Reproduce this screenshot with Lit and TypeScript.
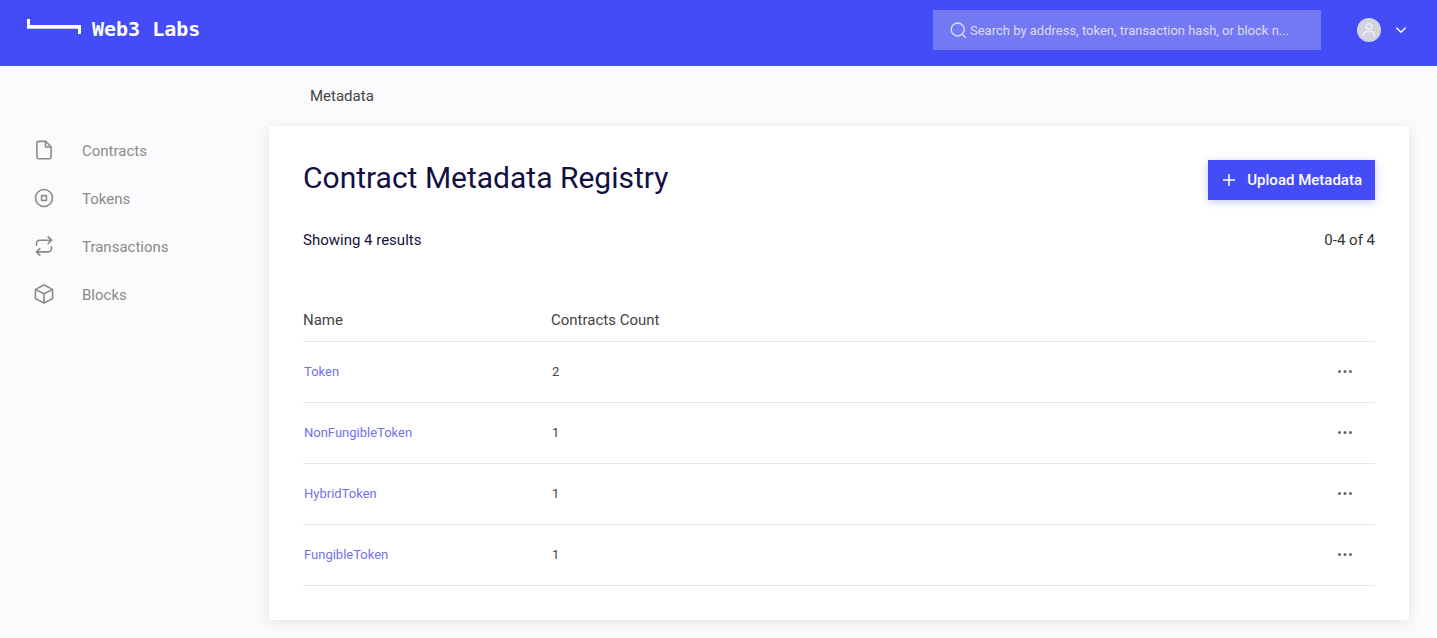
import { LitElement, html, svg, css } from "lit";
import { customElement } from "lit/decorators.js";

const icons = {
  contracts: svg`<path d="M14 1.600H5.500a2 2 0 0 0-2 2v16.800a2 2 0 0 0 2 2h13a2 2 0 0 0 2-2V8.100z"/><path d="M13.800 1.800v6.500h6.500"/>`,
  tokens: svg`<circle cx="12" cy="12" r="10.200"/><path d="M9.100 9.100h5.800v5.800H9.100z"/>`,
  transactions: svg`<path d="M17 1l4 4-4 4"/><path d="M3 11V9a4 4 0 0 1 4-4h14"/><path d="M7 23l-4-4 4-4"/><path d="M21 13v2a4 4 0 0 1-4 4H3"/>`,
  blocks: svg`<path d="M22.300 16.800V7.200a1.200 1.200 0 0 0-.7-1.100l-8.900-4.600a1.500 1.500 0 0 0-1.400 0L2.400 6.100a1.200 1.200 0 0 0-.7 1.100v9.600a1.200 1.200 0 0 0 .7 1.100l8.900 4.600a1.500 1.500 0 0 0 1.400 0l8.900-4.600a1.200 1.200 0 0 0 .7-1.100z"/><path d="M2.100 6.700l9.900 5 9.900-5M12 22.600V11.700"/>`,
};

const navItems = [
  { label: "Contracts", icon: icons.contracts },
  { label: "Tokens", icon: icons.tokens },
  { label: "Transactions", icon: icons.transactions },
  { label: "Blocks", icon: icons.blocks },
];

const entries = [
  { name: "Token", count: 2 },
  { name: "NonFungibleToken", count: 1 },
  { name: "HybridToken", count: 1 },
  { name: "FungibleToken", count: 1 },
];

@customElement("app-header")
class AppHeader extends LitElement {
  static styles = css`
    :host { display: block; }
    .bar {
      display: flex;
      align-items: center;
      gap: 36px;
      min-height: 66px;
      padding: 0 24px 6px 27px;
      box-sizing: border-box;
      background: #444cf7;
      color: #fff;
    }
    .brand {
      display: flex;
      align-items: center;
      gap: 11px;
      margin-right: auto;
      color: #fff;
      text-decoration: none;
      font: 700 20px/24px "DejaVu Sans Mono", monospace;
      white-space: nowrap;
    }
    .brand-name { padding-bottom: 2px; }
    .search {
      display: flex;
      align-items: center;
      gap: 3px;
      flex: 0 1 388px;
      height: 40px;
      padding: 0 16px 0 17px;
      box-sizing: border-box;
      background: #7279f2;
      color: #dcdcf4;
    }
    .search input {
      flex: 1;
      min-width: 0;
      padding: 2px 0 0;
      border: 0;
      outline: 0;
      background: none;
      color: inherit;
      font: 400 13px/20px Roboto, sans-serif;
      text-overflow: ellipsis;
    }
    .search input::placeholder { color: inherit; opacity: 1; }
    .user {
      display: flex;
      align-items: center;
      gap: 8px;
      padding: 0;
      border: 0;
      background: none;
      color: #fff;
      cursor: pointer;
    }
    svg { display: block; fill: none; stroke: currentColor; flex: none; }
  `;

  render() {
    return html`
      <header class="bar">
        <a class="brand" href="#">
          <svg width="54" height="24" viewBox="0 0 54 24" aria-hidden="true">
            <path d="M1.500 1v9M52.500 7v9" stroke-width="3"/>
            <path d="M0 8.500h54" stroke-width="3"/>
            <path d="M0 10.500h54" stroke-width="1" stroke-opacity="0.700"/>
          </svg>
          <span class="brand-name">Web3 Labs</span>
        </a>
        <label class="search">
          <svg width="17" height="17" viewBox="0 0 17 17" stroke-width="1.4" stroke-linecap="round" aria-hidden="true">
            <circle cx="7.700" cy="7.500" r="6.500"/><path d="M12.400 12.300l3 3.200"/>
          </svg>
          <input type="search" aria-label="Search"
            placeholder="Search by address, token, transaction hash, or block n..." />
        </label>
        <button class="user" aria-label="Account menu">
          <svg width="24" height="24" viewBox="0 0 24 24" aria-hidden="true">
            <circle cx="12" cy="12" r="12" fill="#d3d3e0" stroke="none"/>
            <g stroke="#fff" stroke-opacity="0.700" stroke-width="1.2" stroke-linecap="round">
              <circle cx="12" cy="8.400" r="2.900"/>
              <path d="M6.600 18v-1.400a3 3 0 0 1 3-3h4.800a3 3 0 0 1 3 3V18"/>
            </g>
          </svg>
          <svg width="24" height="24" viewBox="0 0 24 24" stroke-width="1.4" stroke-linecap="round" aria-hidden="true">
            <path d="M7.700 10l4.300 4.200L16.300 10"/>
          </svg>
        </button>
      </header>
    `;
  }
}

@customElement("app-sidebar")
class AppSidebar extends LitElement {
  static styles = css`
    :host { display: block; }
    .list { margin: 0; padding: 60px 0 0 34px; list-style: none; }
    .item {
      display: flex;
      align-items: center;
      gap: 28px;
      height: 48px;
      color: #8a8a8a;
      font: 400 15px/20px Roboto, sans-serif;
      text-decoration: none;
    }
    .label { padding-top: 2px; }
    .icon {
      flex: none;
      fill: none;
      stroke: currentColor;
      stroke-width: 1.9;
      stroke-linecap: round;
      stroke-linejoin: round;
    }
  `;

  render() {
    return html`
      <nav aria-label="Main">
        <ul class="list">
          ${navItems.map(
            (item) => html`<li>
              <a class="item" href="#">
                <svg class="icon" width="20" height="20" viewBox="0 0 24 24" aria-hidden="true">${item.icon}</svg>
                <span class="label">${item.label}</span>
              </a>
            </li>`
          )}
        </ul>
      </nav>
    `;
  }
}

@customElement("metadata-registry")
class MetadataRegistry extends LitElement {
  static styles = css`
    :host { display: block; }
    .card {
      padding: 34px;
      background: #fff;
      box-shadow: 0 2px 12px rgba(0, 0, 0, 0.1);
      font: 400 15px/20px Roboto, sans-serif;
      color: #444;
    }
    .row {
      display: flex;
      justify-content: space-between;
      align-items: center;
    }
    .title {
      margin: 0;
      padding-bottom: 4px;
      color: #12113f;
      font-size: 30px;
      line-height: 36px;
      font-weight: 400;
    }
    .upload {
      display: flex;
      align-items: center;
      gap: 12px;
      height: 40px;
      padding: 0 13px 0 15px;
      border: 0;
      background: #444cf7;
      box-shadow: 0 2px 8px rgba(68, 76, 247, 0.3);
      color: #fff;
      font: 500 15px/20px Roboto, sans-serif;
      cursor: pointer;
    }
    .summary { margin-top: 30px; color: #333; }
    .results { color: #12113f; }
    .table {
      width: 100%;
      margin-top: 50px;
      border-collapse: collapse;
      table-layout: fixed;
    }
    .table th {
      height: 39px;
      padding: 0 0 2px;
      font-weight: 400;
      text-align: left;
      vertical-align: middle;
    }
    .table tr { border-bottom: 1px solid #e8e8e8; }
    .table td {
      height: 60px;
      padding: 0 1px;
      font-size: 13px;
      line-height: 20px;
    }
    .name { width: 248px; }
    .action { width: 60px; }
    .link { color: #7370ee; text-decoration: none; }
    .more {
      display: block;
      margin: 0 17px 0 auto;
      padding: 4px;
      border: 0;
      background: none;
      color: #5c6876;
      cursor: pointer;
    }
    svg { display: block; }
  `;

  render() {
    return html`
      <section class="card">
        <div class="row">
          <h1 class="title">Contract Metadata Registry</h1>
          <button class="upload">
            <svg width="12" height="12" viewBox="0 0 12 12" fill="none" stroke="currentColor" stroke-width="1.5" aria-hidden="true">
              <path d="M6 0v12M0 6h12"/>
            </svg>
            Upload Metadata
          </button>
        </div>
        <div class="row summary">
          <span class="results">Showing 4 results</span>
          <span>0-4 of 4</span>
        </div>
        <table class="table">
          <thead>
            <tr>
              <th class="name" scope="col">Name</th>
              <th scope="col">Contracts Count</th>
              <th class="action" scope="col" aria-label="Actions"></th>
            </tr>
          </thead>
          <tbody>
            ${entries.map(
              (entry) => html`<tr>
                <td><a class="link" href="#">${entry.name}</a></td>
                <td>${entry.count}</td>
                <td>
                  <button class="more" aria-label="More actions for ${entry.name}">
                    <svg width="16" height="4" viewBox="0 0 16 4" fill="currentColor" aria-hidden="true">
                      <circle cx="2.500" cy="1.600" r="1.500"/><circle cx="8" cy="1.600" r="1.500"/><circle cx="13.500" cy="1.600" r="1.500"/>
                    </svg>
                  </button>
                </td>
              </tr>`
            )}
          </tbody>
        </table>
      </section>
    `;
  }
}

@customElement("app-root")
class AppRoot extends LitElement {
  static styles = css`
    :host {
      display: flex;
      flex-direction: column;
      min-height: 100vh;
      box-sizing: border-box;
      background: #fbfbfd;
    }
    .body {
      display: grid;
      grid-template-columns: 269px minmax(0, 1fr);
      padding-bottom: 18px;
    }
    .main { padding-right: 28px; }
    .crumb {
      padding: 20px 41px;
      color: #444;
      font: 400 15px/20px Roboto, sans-serif;
    }
  `;

  render() {
    return html`
      <app-header></app-header>
      <div class="body">
        <app-sidebar></app-sidebar>
        <main class="main">
          <div class="crumb">Metadata</div>
          <metadata-registry></metadata-registry>
        </main>
      </div>
    `;
  }
}
